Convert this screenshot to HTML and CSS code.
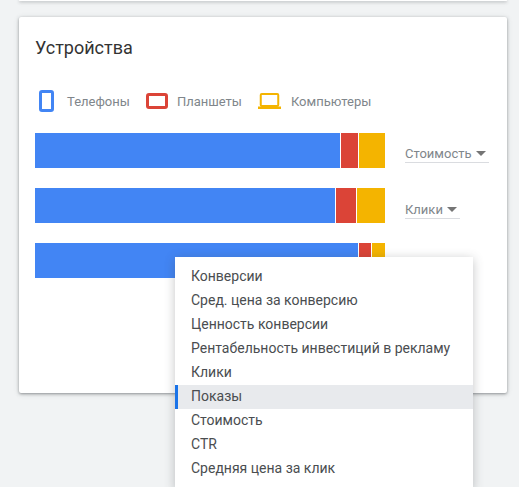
FILE: index.html
```html
<!DOCTYPE html>
<html lang="en">
<head>
    <meta charset="UTF-8">
    <meta name="viewport" content="width=device-width, initial-scale=1.0">
    <title>Устройства</title>
    <link rel="stylesheet" href="styles.css">
</head>
<body>
    <div class="card top-card"></div>

    <div class="card devices">
        <h2 class="title">Устройства</h2>

        <div class="legend">
            <div class="legend-item phone">
                <svg width="15" height="22" viewBox="0 0 15 22"><rect x="1.5" y="1.5" width="12" height="19" rx="1.5" fill="none" stroke="#4285f4" stroke-width="3"/></svg>
                <span>Телефоны</span>
            </div>
            <div class="legend-item tablet">
                <svg width="22" height="16" viewBox="0 0 22 16"><rect x="1.5" y="1.5" width="19" height="13" rx="1.5" fill="none" stroke="#db4437" stroke-width="3"/></svg>
                <span>Планшеты</span>
            </div>
            <div class="legend-item laptop">
                <svg width="23" height="16" viewBox="0 0 23 16"><rect x="2.75" y="1" width="17.5" height="12" rx="1" fill="none" stroke="#f4b400" stroke-width="2"/><rect x="0" y="13.5" width="23" height="2.5" fill="#f4b400"/></svg>
                <span>Компьютеры</span>
            </div>
        </div>

        <div class="rows">
            <div class="row">
                <div class="bar">
                    <div class="seg blue" style="width: 305px"></div>
                    <div class="seg red" style="width: 17px"></div>
                    <div class="seg yellow" style="width: 26px"></div>
                </div>
                <div class="select wide">Стоимость <i class="caret"></i></div>
            </div>
            <div class="row">
                <div class="bar">
                    <div class="seg blue" style="width: 300px"></div>
                    <div class="seg red" style="width: 20px"></div>
                    <div class="seg yellow" style="width: 28px"></div>
                </div>
                <div class="select narrow">Клики <i class="caret"></i></div>
            </div>
            <div class="row">
                <div class="bar">
                    <div class="seg blue" style="width: 323px"></div>
                    <div class="seg red" style="width: 12px"></div>
                    <div class="seg yellow" style="width: 13px"></div>
                </div>
            </div>
        </div>
    </div>

    <div class="menu">
        <div class="menu-item">Конверсии</div>
        <div class="menu-item">Сред. цена за конверсию</div>
        <div class="menu-item">Ценность конверсии</div>
        <div class="menu-item">Рентабельность инвестиций в рекламу</div>
        <div class="menu-item">Клики</div>
        <div class="menu-item active">Показы</div>
        <div class="menu-item">Стоимость</div>
        <div class="menu-item">CTR</div>
        <div class="menu-item">Средняя цена за клик</div>
    </div>
</body>
</html>
```

FILE: styles.css
```css
html, body {
    height: 487px;
    overflow: hidden;
}

body {
    font-family: Roboto, Arial, sans-serif;
    margin: 0;
    padding: 0 12px 0 19px;
    background-color: #f1f3f4;
    position: relative;
}

.card {
    background-color: #fff;
    border-radius: 2px;
    box-shadow: 0 1px 3px rgba(60, 64, 67, 0.5), 0 1px 6px rgba(60, 64, 67, 0.12);
}

.top-card {
    height: 1px;
    margin-bottom: 16px;
}

.devices {
    height: 376px;
    padding: 20px 16px 0;
    box-sizing: border-box;
}

.title {
    margin: 0;
    font-size: 18px;
    font-weight: 400;
    line-height: 22px;
    color: #333;
}

.legend {
    display: flex;
    align-items: center;
    height: 24px;
    margin-top: 30px;
    padding-left: 4px;
    font-size: 13px;
    color: #80868b;
}

.legend-item {
    display: flex;
    align-items: center;
}

.legend-item svg {
    display: block;
    margin-right: 13px;
}

.legend-item.phone {
    margin-right: 16px;
}

.legend-item.tablet {
    margin-right: 16px;
}

.legend-item.tablet svg {
    margin-right: 9px;
}

.legend-item.laptop svg {
    margin-right: 10px;
}

.rows {
    margin-top: 20px;
}

.row {
    display: flex;
    align-items: center;
    height: 35px;
    margin-bottom: 20px;
}

.bar {
    display: flex;
    gap: 1px;
    width: 350px;
    height: 35px;
    flex: none;
}

.seg {
    height: 100%;
}

.blue {
    background-color: #4285f4;
}

.red {
    background-color: #db4437;
}

.yellow {
    background-color: #f4b400;
}

.select {
    margin-left: 20px;
    width: 55px;
    height: 19px;
    margin-top: 4px;
    line-height: 22px;
    font-size: 13px;
    color: #80868b;
    white-space: nowrap;
    border-bottom: 1px solid #dadce0;
}

.select.wide {
    width: 84px;
}

.select.narrow {
    margin-top: 6px;
}

.caret {
    display: inline-block;
    width: 0;
    height: 0;
    margin-left: 1px;
    vertical-align: 2px;
    border-left: 5px solid transparent;
    border-right: 5px solid transparent;
    border-top: 5px solid #757575;
}

.menu {
    position: absolute;
    top: 257px;
    left: 175px;
    width: 298px;
    padding: 8px 0;
    background-color: #fff;
    box-shadow: 0 2px 10px rgba(60, 64, 67, 0.3);
}

.menu-item {
    height: 24px;
    line-height: 22px;
    padding-left: 16px;
    font-size: 14px;
    color: #4a4d50;
    white-space: nowrap;
}

.menu-item.active {
    background-color: #e8eaed;
    box-shadow: inset 3px 0 0 #1a73e8;
}
```
